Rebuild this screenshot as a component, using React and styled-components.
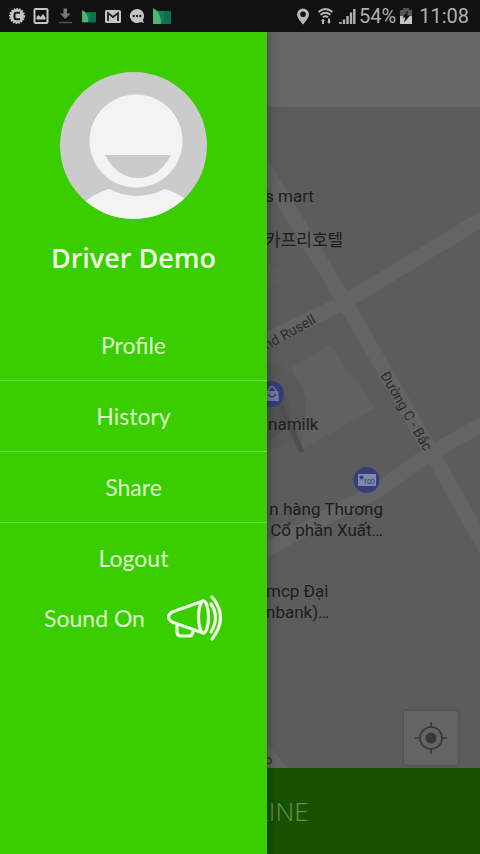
import React, { useState } from "react";
import styled, { createGlobalStyle } from "styled-components";

const menuItems = ["Profile", "History", "Share", "Logout"];

function StatusBar() {
  return (
    <StatusWrapper>
      <StatusGroup $gap="6px">
        <svg width="18" height="18" viewBox="0 0 18 18">
          <circle cx="9" cy="9" r="7" fill="#c4c4c4" />
          <circle
            cx="9"
            cy="9"
            r="7.300"
            fill="none"
            stroke="#c4c4c4"
            strokeWidth="1.600"
            strokeDasharray="1.600 1.200"
          />
          <path
            d="M12 5.800H8.500Q6.500 5.800 6.500 7.800v2.400q0 2 2 2H12"
            fill="none"
            stroke="#161616"
            strokeWidth="2"
          />
        </svg>
        <svg width="18" height="18" viewBox="0 0 18 18">
          <rect
            x="2.500"
            y="2"
            width="13"
            height="14"
            rx="1"
            fill="none"
            stroke="#c4c4c4"
            strokeWidth="2"
          />
          <path d="M4.500 12.500V10l2-2 2 2 2.500-3 2.500 3.500v2z" fill="#c4c4c4" />
        </svg>
        <svg width="18" height="18" viewBox="0 0 18 18">
          <path d="M7.500 1.500h3.500v5h3.500L9.200 12 4 6.500h3.500z" fill="#777" />
          <path d="M3 15.500h13" stroke="#555" strokeWidth="1.500" />
        </svg>
        <FolderIcon width={18} height={13} />
        <svg width="18" height="18" viewBox="0 0 18 18">
          <rect x="1" y="3" width="16" height="13" rx="1.500" fill="#c4c4c4" />
          <path
            d="M4 14V6l5 4 5-4v8"
            fill="none"
            stroke="#222"
            strokeWidth="1.800"
          />
        </svg>
        <svg width="18" height="18" viewBox="0 0 18 18">
          <path
            d="M9 2a7 7 0 1 0 3.500 13l3.500 1-1.200-3A7 7 0 0 0 9 2z"
            fill="#c4c4c4"
          />
          <g fill="#222">
            <circle cx="5.700" cy="9" r="1.200" />
            <circle cx="9" cy="9" r="1.200" />
            <circle cx="12.300" cy="9" r="1.200" />
          </g>
        </svg>
        <FolderIcon width={20} height={17} />
      </StatusGroup>
      <StatusGroup $gap="3px">
        <svg width="18" height="18" viewBox="0 0 18 18">
          <path
            fillRule="evenodd"
            d="M9 1.500a6 6 0 0 0-6 6C3 11 9 17.500 9 17.500s6-6.500 6-10a6 6 0 0 0-6-6zM9 4.500a2.800 2.800 0 1 1 0 5.600 2.800 2.800 0 0 1 0-5.600z"
            fill="#b8b8b8"
          />
        </svg>
        <svg width="20" height="18" viewBox="0 0 20 18">
          <g fill="none" stroke="#b8b8b8" strokeWidth="1.800">
            <path d="M3.500 5q7-6 14 0" />
            <path d="M5.500 7.800q5-4 10 0" />
            <path d="M8 10.300q2.500-2 5 0" />
          </g>
          <path
            d="M8 11.500l2 2.500H9v3H7v-3H6zM14 17l-2-2.500h1v-3h2v3h1z"
            fill="#b8b8b8"
          />
        </svg>
        <svg width="18" height="18" viewBox="0 0 18 18">
          <path
            d="M2.500 17v-2M6 17v-4.500M9.500 17V9M13 17V5.500M16.300 17V2"
            stroke="#b0b0b0"
            strokeWidth="2.400"
          />
        </svg>
        <StatusText>54%</StatusText>
        <svg width="14" height="18" viewBox="0 0 14 18">
          <path d="M1 3h3V1h6v2h3v6H1z" fill="#555" />
          <path d="M1 9h12v8H1z" fill="#c4c4c4" />
          <path d="M9 3.500L3.500 10.500h2.800L5 15.500 11 8.500H8z" fill="#111" />
        </svg>
        <Clock>11:08</Clock>
      </StatusGroup>
    </StatusWrapper>
  );
}

function FolderIcon({ width, height }) {
  return (
    <svg
      width={width}
      height={height}
      viewBox="0 0 20 17"
    >
      <path d="M1 1l5 2h13v13H1z" fill="#14804f" />
      <path d="M12 3h7v13h-9q3-6 2-13z" fill="#0e7050" />
      <path d="M1 0q8 4 8 16H1z" fill="#4db870" />
    </svg>
  );
}

function Avatar() {
  return (
    <AvatarSvg viewBox="0 0 147 147" role="img" aria-label="Driver Demo">
      <defs>
        <clipPath id="face">
          <circle cx="73.500" cy="73.500" r="73.500" />
        </clipPath>
      </defs>
      <g clipPath="url(#face)">
        <rect width="147" height="147" fill="#cbcbcb" />
        <path
          d="M20 134Q32 122 49 117q28 14 56 0 17 5 28 17v20H20z"
          fill="#f3f3f3"
        />
        <circle cx="76" cy="69" r="46.500" fill="#f3f3f3" />
        <path d="M45 83h66q-12 23-33 23T45 83z" fill="#cbcbcb" />
      </g>
    </AvatarSvg>
  );
}

function HornIcon() {
  return (
    <svg width="58" height="48" viewBox="0 0 58 48">
      <g
        fill="none"
        stroke="#effde6"
        strokeWidth="3.200"
        strokeLinecap="round"
        strokeLinejoin="round"
      >
        <path d="M38 7L7 18q-7 5 0 10l31 11" />
        <ellipse cx="38.500" cy="23" rx="5" ry="16" />
        <path d="M12 31v7q0 4 4 4h8q3 0 4-4l1-2" />
        <path d="M46 10q9 13 0 28" />
        <path d="M47 3q17 20 0 42" />
      </g>
    </svg>
  );
}

function CityMap() {
  return (
    <MapSvg viewBox="0 107 480 661" preserveAspectRatio="xMaxYMin slice">
      <path d="M266 262l15 8 5 10-20 8z" fill="#605e59" />
      <path d="M292 367l38-22 45 63-72 41z" fill="#616161" />
      <circle cx="262" cy="406" r="44" fill="#595959" />
      <circle cx="262" cy="412" r="28" fill="#545454" />
      <path d="M280 404l22 48" stroke="#4e4e4e" strokeWidth="5" />
      <g fill="none" stroke="#646464" strokeWidth="15">
        <path d="M490 214L345 302 250 348" />
        <path d="M250 144L345 302 430 450 500 574" />
        <path d="M490 420L430 453 380 489 250 558" />
        <path d="M250 734l36 44" />
      </g>

      <circle cx="271" cy="394" r="13" fill="#363e79" />
      <path d="M265 391h13l1 10h-14z" fill="#747a9d" />
      <path d="M268 391q4-9 8 0" fill="none" stroke="#747a9d" strokeWidth="1.500" />
      <path d="M268 394q4 6 8 0" fill="none" stroke="#363e79" strokeWidth="1.500" />

      <circle cx="366.500" cy="480" r="13" fill="#363e79" />
      <rect x="358" y="474" width="18" height="12" fill="#8187a8" />
      <circle cx="361.500" cy="477.500" r="2" fill="#363e79" />
      <PinText x="363" y="484">
        100
      </PinText>

      <MapText x="265" y="202">
        s mart
      </MapText>
      <MapText x="265" y="246">
        카프리호텔
      </MapText>
      <MapText x="268" y="430">
        namilk
      </MapText>
      <MapText x="383" y="515" textAnchor="end">
        n hàng Thương
      </MapText>
      <MapText x="383" y="536" textAnchor="end">
        Cổ phần Xuất…
      </MapText>
      <MapText x="266" y="597">
        mcp Đại
      </MapText>
      <MapText x="266" y="618">
        nbank)…
      </MapText>
      <StreetText transform="translate(267 350) rotate(-29)">
        nd Rusell
      </StreetText>
      <StreetText transform="translate(380 375) rotate(60)">
        Đường C - Bắc
      </StreetText>
      <StreetText transform="translate(269 766) rotate(-55)">o</StreetText>
    </MapSvg>
  );
}

function App() {
  const [sound, setSound] = useState(true);
  return (
    <Page>
      <GlobalStyle />
      <StatusBar />
      <Screen>
        <TopBar />
        <MapArea>
          <CityMap />
          <LocateButton type="button" aria-label="My location">
            <svg width="34" height="34" viewBox="0 0 34 34">
              <circle cx="17" cy="17" r="5.500" fill="#383838" />
              <g fill="none" stroke="#383838" strokeWidth="1.600">
                <circle cx="17" cy="17" r="11" />
                <path d="M17 1v5M17 28v5M1 17h5M28 17h5" />
              </g>
            </svg>
          </LocateButton>
        </MapArea>
        <OnlineButton type="button">GO ONLINE</OnlineButton>
        <Drawer>
          <Avatar />
          <DriverName>Driver Demo</DriverName>
          <Menu>
            {menuItems.map((item) => (
              <MenuLink key={item} href={`#${item.toLowerCase()}`}>
                {item}
              </MenuLink>
            ))}
          </Menu>
          <SoundButton
            type="button"
            aria-pressed={sound}
            onClick={() => setSound(!sound)}
          >
            {sound ? "Sound On" : "Sound Off"}
            <HornIcon />
          </SoundButton>
        </Drawer>
      </Screen>
    </Page>
  );
}

const GlobalStyle = createGlobalStyle`
  * {
    box-sizing: border-box;
  }
  body {
    margin: 0;
    background: #5c5c5c;
  }
  button {
    border: none;
    padding: 0;
    cursor: pointer;
  }
`;
const Page = styled.div`
  min-height: 100vh;
  display: flex;
  flex-direction: column;
`;
const StatusWrapper = styled.header`
  height: 32px;
  padding: 0 11px 0 8px;
  display: flex;
  align-items: center;
  justify-content: space-between;
  background: #111;
`;
const StatusGroup = styled.div`
  display: flex;
  align-items: center;
  gap: ${({ $gap }) => $gap};
`;
const StatusText = styled.span`
  font-family: Roboto, sans-serif;
  font-size: 20px;
  line-height: 32px;
  color: #b0b0b0;
`;
const Clock = styled(StatusText)`
  margin-left: 3px;
`;
const Screen = styled.main`
  position: relative;
  flex: 1;
  display: flex;
  flex-direction: column;
  overflow: hidden;
`;
const TopBar = styled.div`
  height: 75px;
  background: #666;
  box-shadow: 0 1px 2px rgba(0, 0, 0, 0.2);
`;
const MapArea = styled.section`
  position: relative;
  flex: 1;
  display: flex;
  min-height: 400px;
  background: #5c5c5c;
`;
const MapSvg = styled.svg`
  flex: 1;
  width: 100%;
  height: auto;
`;
const MapText = styled.text`
  font-family: Roboto, "Noto Sans CJK KR", sans-serif;
  font-size: 17px;
  fill: #1d1d1d;
`;
const StreetText = styled(MapText)`
  font-size: 14px;
  fill: #2c2c2c;
`;
const PinText = styled(MapText)`
  font-size: 7px;
  fill: #363e79;
`;
const LocateButton = styled.button`
  position: absolute;
  right: 22px;
  bottom: 3px;
  width: 54px;
  height: 54px;
  display: flex;
  align-items: center;
  justify-content: center;
  border-radius: 2px;
  background: #646464;
  box-shadow: 0 0 3px rgba(0, 0, 0, 0.3);
`;
const OnlineButton = styled.button`
  height: 86px;
  background: #175200;
  color: #6a8c5e;
  font-family: "Open Sans", sans-serif;
  font-size: 26px;
  font-weight: 300;
`;
const Drawer = styled.aside`
  position: absolute;
  top: 0;
  bottom: 0;
  left: 0;
  width: 267px;
  max-width: 80vw;
  padding-top: 40px;
  display: flex;
  flex-direction: column;
  align-items: center;
  background: #3ace01;
  box-shadow: 0 0 12px rgba(0, 0, 0, 0.4);
`;
const AvatarSvg = styled.svg`
  width: 147px;
  height: 147px;
`;
const DriverName = styled.h1`
  margin: 21px 0 34px;
  font-family: "Open Sans", sans-serif;
  font-size: 27px;
  font-weight: 600;
  line-height: 36px;
  color: #effde6;
`;
const Menu = styled.nav`
  align-self: stretch;
`;
const MenuLink = styled.a`
  display: block;
  height: 71px;
  border-bottom: 1px solid #6bdd40;
  font-family: Lato, sans-serif;
  font-size: 23px;
  line-height: 71px;
  text-align: center;
  text-decoration: none;
  color: #dcf9ce;
  &:last-child {
    border-bottom: none;
  }
`;
const SoundButton = styled.button`
  display: flex;
  align-items: center;
  gap: 20px;
  background: none;
  font-family: Lato, sans-serif;
  font-size: 23px;
  color: #dcf9ce;
`;

export default App;
